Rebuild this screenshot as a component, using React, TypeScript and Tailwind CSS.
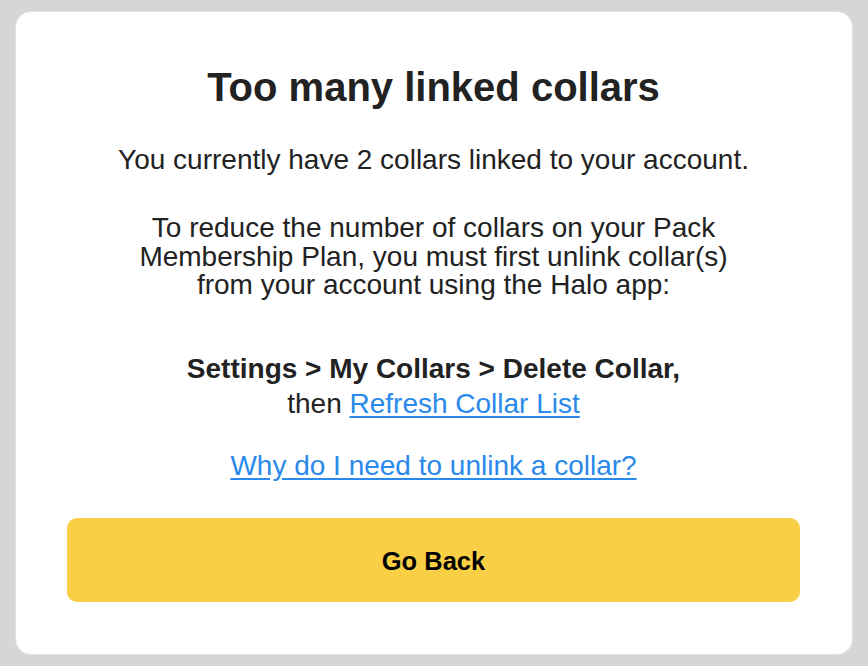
export default function App() {
  return (
    <div
      className="min-h-[666px] w-full bg-[#d6d6d6] px-[15px] pt-[11px] pb-[11px]"
      style={{ fontFamily: '"Liberation Sans", Arial, sans-serif' }}
    >
      <section className="flex h-[644px] flex-col items-center rounded-[16px] border border-[#e4e4e4] bg-white pt-[53px] pr-[52px] pl-[51px] text-[#222222]">
        <h1 className="text-[40px] leading-[44px] font-bold">Too many linked collars</h1>

        <p className="mt-[36px] text-[28px] leading-[30px]">
          You currently have 2 collars linked to your account.
        </p>

        <p className="mt-[39px] max-w-[610px] text-center text-[28px] leading-[28.5px]">
          To reduce the number of collars on your Pack Membership Plan, you must first unlink
          collar(s) from your account using the Halo app:
        </p>

        <div className="mt-[51px] text-center text-[28px] leading-[35px]">
          <p className="font-bold">Settings &gt; My Collars &gt; Delete Collar,</p>
          <p>
            then{' '}
            <a href="#" className="text-[#2a89ea] underline underline-offset-[3px]">
              Refresh Collar List
            </a>
          </p>
        </div>

        <a
          href="#"
          className="mt-[30px] text-[28px] leading-[30px] text-[#2a89ea] underline underline-offset-[3px]"
        >
          Why do I need to unlink a collar?
        </a>

        <button className="mt-[37px] flex h-[84px] w-full items-center justify-center rounded-[10px] bg-[#f9cf45] pt-[3px] text-[25.5px] font-bold text-black">
          Go Back
        </button>
      </section>
    </div>
  )
}
